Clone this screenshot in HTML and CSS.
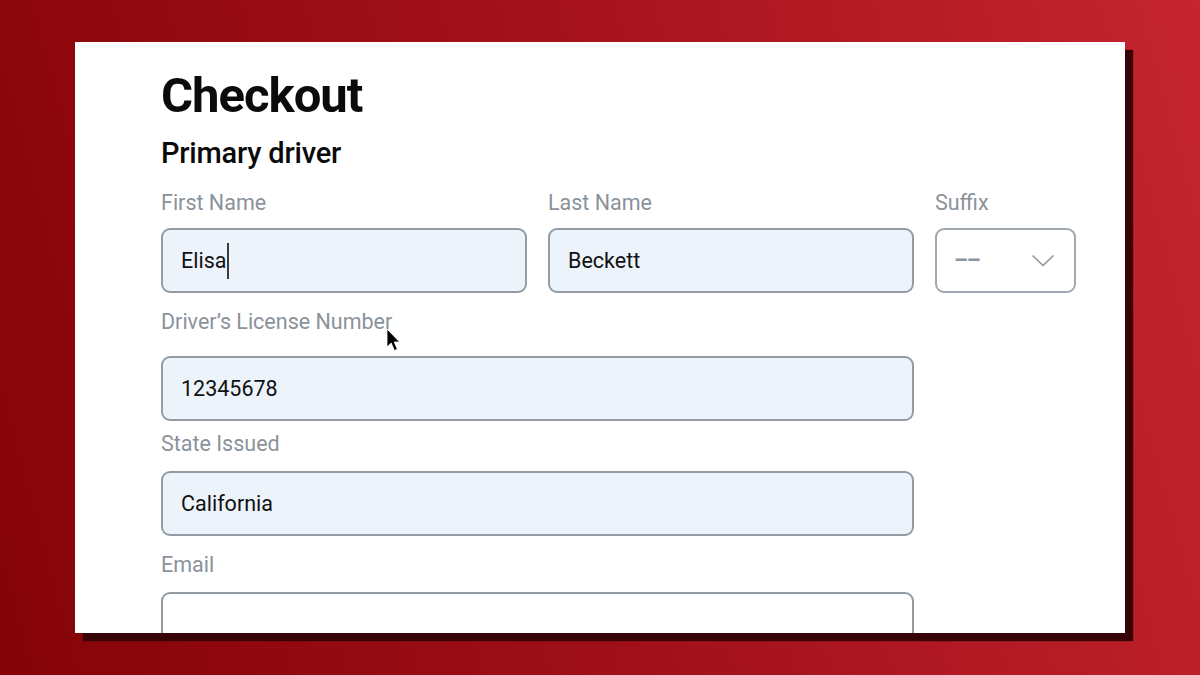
FILE: index.html
```html
<!DOCTYPE html>
<html lang="en">
<head>
<meta charset="utf-8">
<title>Checkout</title>
<link rel="stylesheet" href="styles.css">
</head>
<body>
<main class="card">
  <h1 class="title">Checkout</h1>
  <h2 class="subtitle">Primary driver</h2>
  <form class="form">
    <div class="field">
      <span class="label">First Name</span>
      <div class="input filled">Elisa<span class="caret"></span></div>
    </div>
    <div class="field">
      <span class="label">Last Name</span>
      <div class="input filled">Beckett</div>
    </div>
    <div class="field">
      <span class="label">Suffix</span>
      <div class="input select">
        <span class="placeholder">––</span>
        <svg class="chevron" width="24" height="13" viewBox="0 0 24 13"><polyline points="1.5,1.5 12,11.5 22.5,1.5" fill="none" stroke="#8b939c" stroke-width="1.6"/></svg>
      </div>
    </div>
    <div class="field wide license">
      <span class="label">Driver’s License Number</span>
      <div class="input filled">12345678</div>
    </div>
    <div class="field wide state">
      <span class="label">State Issued</span>
      <div class="input filled">California</div>
    </div>
    <div class="field wide email">
      <span class="label">Email</span>
      <div class="input"></div>
    </div>
  </form>
  <svg class="pointer" width="16" height="25" viewBox="0 0 16 25"><path d="M1 1 L1 19 L5.2 15 L8.4 22.5 L11.4 21.2 L8.2 14 L13.6 14 Z" fill="#000" stroke="#fff" stroke-width="0.8"/></svg>
</main>
</body>
</html>
```
FILE: styles.css
```css
* { box-sizing: border-box; }
html, body { margin: 0; height: 100%; }
body {
  width: 1200px;
  height: 675px;
  padding: 42px 75px;
  background: linear-gradient(75deg, #840307 0%, #a3111a 50%, #c5252f 100%);
  font-family: Roboto, "Liberation Sans", Arial, sans-serif;
  overflow: hidden;
}
.card {
  position: relative;
  width: 1050px;
  height: 591px;
  background: #fff;
  padding: 26px 0 0 86px;
  overflow: hidden;
  box-shadow: 8px 8px 1px #380306;
}
.title {
  margin: 0;
  font-size: 49px;
  line-height: 56px;
  font-weight: 700;
  letter-spacing: -1px;
  color: #0b0b0b;
}
.subtitle {
  margin: 12px 0 0;
  font-size: 29px;
  line-height: 34px;
  font-weight: 500;
  letter-spacing: -0.2px;
  color: #0b0b0b;
}
.form {
  margin-top: 21px;
  display: grid;
  grid-template-columns: 366px 366px 141px;
  column-gap: 21px;
  row-gap: 17px;
  align-content: start;
}
.field {
  display: flex;
  flex-direction: column;
  gap: 13px;
}
.field.wide { grid-column: span 2; }
.field.license { gap: 22px; }
.field.state { margin-top: -6px; gap: 15px; }
.field.email { gap: 15px; }
.label {
  font-size: 21.5px;
  line-height: 24px;
  color: #8a929b;
}
.input {
  height: 65px;
  border: 2px solid #939ba5;
  border-radius: 9px;
  background: #fff;
  display: flex;
  align-items: center;
  padding: 0 18px;
  font-size: 21.5px;
  color: #111;
  flex-shrink: 0;
}
.input.filled { background: #edf3fa; }
.caret {
  display: inline-block;
  width: 1.5px;
  height: 36px;
  background: #3c3c3c;
  margin-left: 1px;
}
.select { justify-content: space-between; padding: 0 19px 0 17px; border-color: #a0a7b0; }
.placeholder {
  color: #8b939c;
  font-size: 22px;
  font-weight: 700;
  letter-spacing: -1px;
}
.pointer {
  position: absolute;
  left: 311px;
  top: 286px;
}
```
